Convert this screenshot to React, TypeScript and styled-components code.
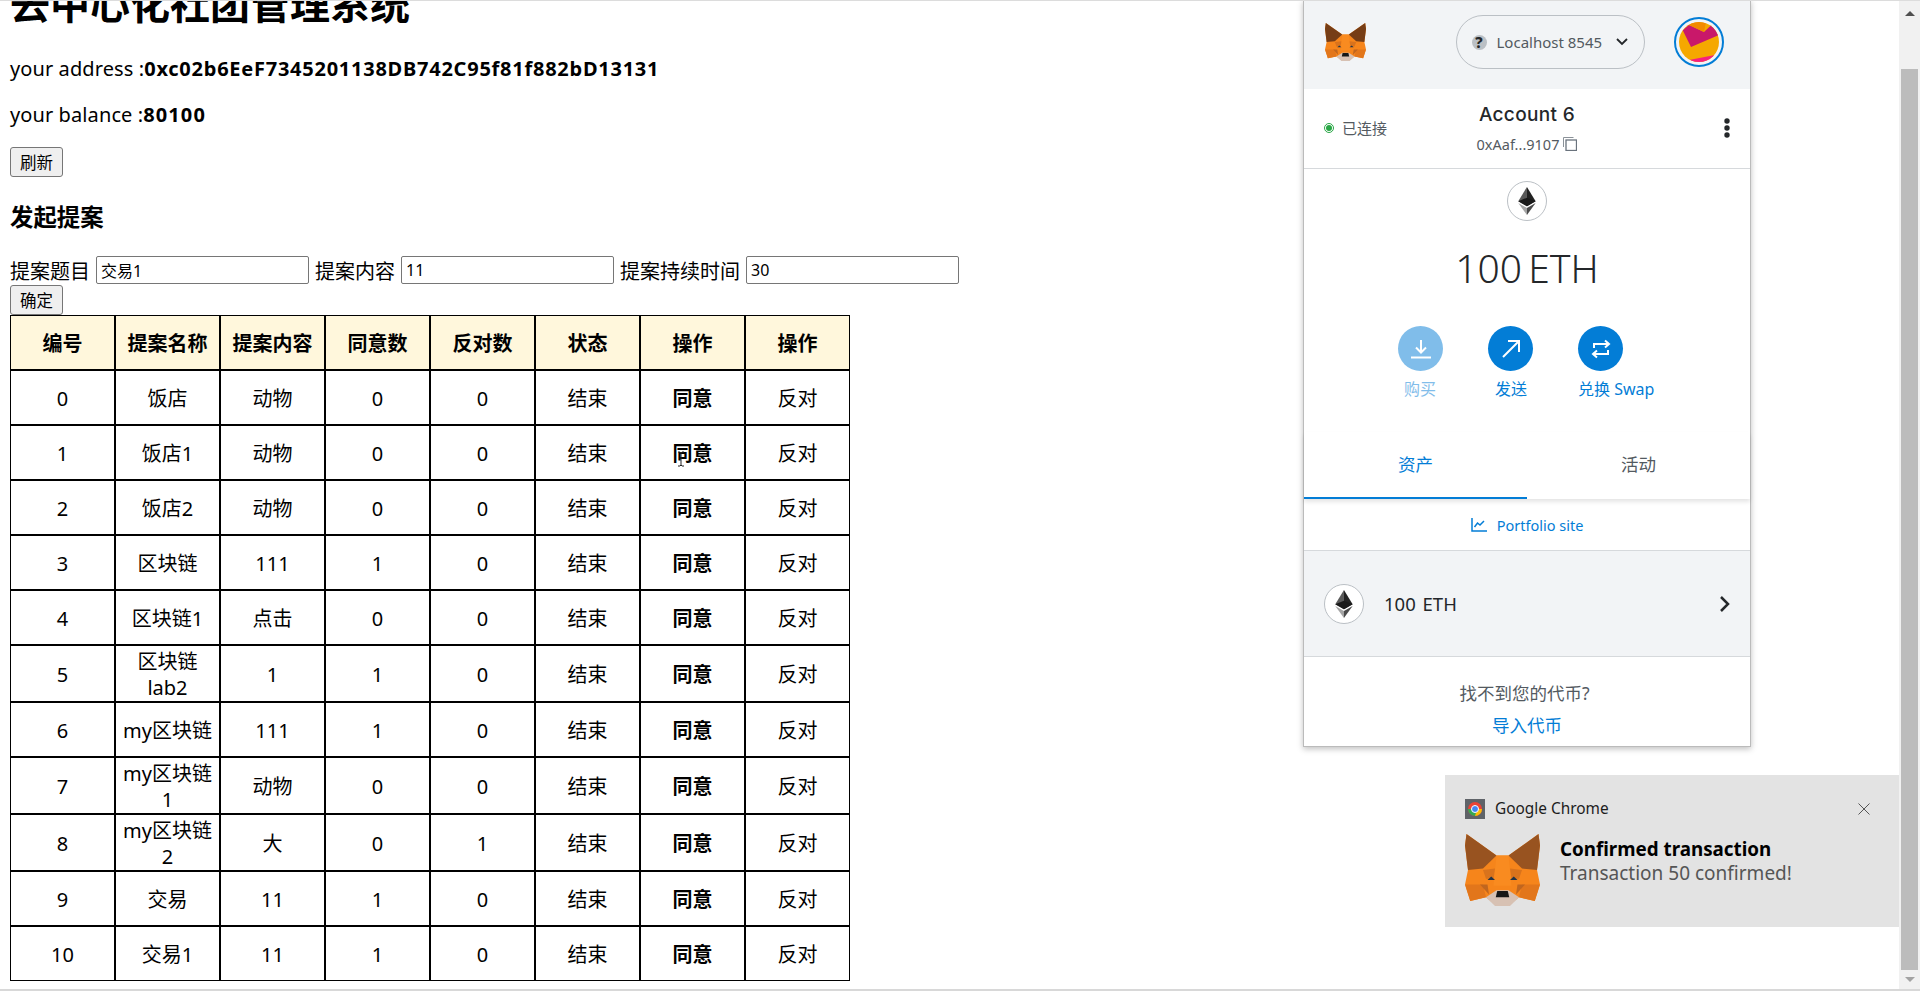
import React from "react";
import styled, { createGlobalStyle } from "styled-components";

const Global = createGlobalStyle`
  html, body { margin: 0; padding: 0; height: 991px; overflow: hidden; background: #fff; }
  #root { height: 991px; }
`;
const FONT = `"Noto Sans", "Noto Sans CJK SC", sans-serif`;
const Viewport = styled.div`
  position: relative; width: 1920px; height: 991px; overflow: hidden;
  border-top: 1px solid #dcdcdc; border-bottom: 2px solid #d8d8d8; box-sizing: border-box;
  font-family: ${FONT}; color: #000; font-size: 20px;
`;
const Page = styled.main`
  padding: 0 10px; margin-top: -20px; width: 1040px;
`;
const Title = styled.h1`
  margin: 0 0 28px; font-size: 40px; line-height: 46px; font-weight: 700;
`;
const InfoLine = styled.p`
  margin: 0 0 18px; line-height: 28px; font-size: 20px; white-space: nowrap; letter-spacing: .1px;
`;
const InfoValue = styled.b<{ $spacing: number }>`
  font-weight: 700; letter-spacing: ${p => p.$spacing}px;
`;
const Button = styled.button`
  display: block; width: 53px; height: 30px; padding: 0; background: #efefef;
  border: 1px solid #767676; border-radius: 3px; font: 16.5px ${FONT}; color: #000;
`;
const SubTitle = styled.h3`
  margin: 27px 0 25px; font-size: 23.4px; line-height: 27px; font-weight: 700;
`;
const FormRow = styled.div`
  display: flex; align-items: center; height: 28px; gap: 6px; white-space: nowrap; margin-bottom: 1px;
`;
const Field = styled.input`
  width: 213px; height: 28px; box-sizing: border-box; padding: 0 4px;
  border: 1px solid #767676; border-radius: 2px; font: 16px ${FONT}; color: #000;
`;
const Table = styled.table`
  border-collapse: separate; border-spacing: 0; table-layout: fixed; width: 840px; text-align: center;
`;
const Th = styled.th`
  box-sizing: border-box; width: 105px; height: 55px; padding: 2px 1px 0; background: #fff7dc; font-size: 20px; font-weight: 700;
  border: 1px solid #000; line-height: 24px;
`;
const Td = styled.td<{ $strong?: boolean }>`
  box-sizing: border-box; padding: 2.5px 1px .5px; height: 55px; font-size: 20px; line-height: 26px; font-weight: ${p => (p.$strong ? 700 : 400)};
  border: 1px solid #000; white-space: pre-line;
`;
const Popup = styled.section`
  position: absolute; left: 1303px; top: -1px; width: 448px; height: 747px; background: #fff;
  box-sizing: border-box; border-left: 1px solid #bbb; border-right: 1px solid #bbb; border-bottom: 1px solid #bbb;
  box-shadow: 0 2px 6px rgba(0,0,0,.25); font-family: ${FONT}; color: #24272a;
  display: flex; flex-direction: column;
`;
const AppBar = styled.header`
  height: 89px; flex: none; background: #f2f4f6; display: flex; align-items: center; padding: 0 26px 5px 21px; box-sizing: border-box; justify-content: space-between;
`;
const Network = styled.div`
  margin-left: 60px; width: 189px; height: 54px; box-sizing: border-box; border: 1px solid #bbc0c5; border-radius: 27px;
  display: flex; align-items: center; gap: 10px; padding-left: 15px; color: #535a61; font-size: 15px;
`;
const NetQuestion = styled.span`
  width: 15px; height: 15px; border-radius: 50%; background: #bbc0c5; color: #24272a; font-weight: 800; font-size: 15px; line-height: 15px;
  display: flex; align-items: center; justify-content: center;
`;
const Avatar = styled.div`
  width: 50px; height: 50px; box-sizing: border-box; border: 2px solid #037dd6; border-radius: 50%; padding: 3px; display: flex;
`;
const AccountBar = styled.div`
  height: 80px; box-sizing: border-box; flex: none; border-bottom: 1px solid #d6d9dc; display: flex; align-items: center; padding: 0 19px 2px 20px; position: relative; justify-content: space-between;
`;
const Connected = styled.div`
  display: flex; align-items: center; gap: 8px; font-size: 15px; color: #535a61;
`;
const Dot = styled.span`
  width: 10px; height: 10px; box-sizing: border-box; border-radius: 50%; border: 1px solid #28a745; display: flex; align-items: center; justify-content: center;
  &::after { content: ""; width: 6px; height: 6px; border-radius: 50%; background: #28a745; }
`;
const AccountCenter = styled.div`
  position: absolute; left: 0; right: 0; top: 14px; display: flex; flex-direction: column; align-items: center; gap: 7px; pointer-events: none;
`;
const AccountName = styled.div`
  font-size: 19px; font-weight: 500; line-height: 24px; letter-spacing: .35px; font-family: "Inter", ${FONT};
`;
const AccountAddr = styled.div`
  font-size: 14.5px; line-height: 20px; color: #535a61; display: flex; align-items: center; gap: 4px;
`;
const Balance = styled.div`
  flex: none; height: 263px; box-sizing: border-box; display: flex; flex-direction: column; align-items: center; padding-top: 12px;
`;
const EthCircle = styled.div<{ $size: number }>`
  width: ${p => p.$size}px; height: ${p => p.$size}px; border-radius: 50%; background: #fff; border: 1px solid #bbc0c5; box-sizing: border-box;
  display: flex; align-items: center; justify-content: center; flex: none;
`;
const Amount = styled.div`
  margin-top: 24px; font-size: 39px; line-height: 46px; font-weight: 300; color: #24272a; word-spacing: -4px;
`;
const Actions = styled.div`
  display: flex; margin-top: 35px; padding-left: 94px; align-self: stretch;
`;
const Action = styled.div<{ $faded?: boolean }>`
  width: 90px; display: flex; flex-direction: column; align-items: flex-start; opacity: ${p => (p.$faded ? 0.5 : 1)}; color: #037dd6;
`;
const ActionCircle = styled.span`
  width: 45px; height: 45px; border-radius: 50%; background: #037dd6; display: flex; align-items: center; justify-content: center;
`;
const ActionLabel = styled.span<{ $indent: number }>`
  margin-top: 8px; margin-left: ${p => p.$indent}px; font-size: 16px; line-height: 20px; white-space: nowrap;
`;
const Tabs = styled.nav`
  flex: none; display: flex; height: 67px; box-shadow: 0 3px 4px rgba(0,0,0,.1); position: relative;
`;
const Tab = styled.div<{ $active?: boolean }>`
  flex: 1; display: flex; align-items: center; justify-content: center; font-size: 17.5px; padding-bottom: 2px;
  color: ${p => (p.$active ? "#037dd6" : "#535a61")}; border-bottom: 2px solid ${p => (p.$active ? "#037dd6" : "transparent")};
`;
const PortfolioRow = styled.div`
  flex: none; height: 51px; border-bottom: 1px solid #d6d9dc; display: flex; align-items: center; justify-content: center; gap: 10px; color: #037dd6; font-size: 14.5px;
`;
const AssetRow = styled.div`
  flex: none; height: 105px; background: #f2f4f6; border-bottom: 1px solid #d6d9dc; display: flex; align-items: center; padding: 0 20px; gap: 20px; font-size: 18.5px; color: #24272a;
`;
const AssetText = styled.span`flex: 1; word-spacing: 2px;`;
const Help = styled.div`
  flex: 1; display: flex; flex-direction: column; align-items: center; padding-top: 20px; font-size: 17.5px; line-height: 32px; color: #535a61;
`;
const HelpQuestion = styled.span`margin-right: 5px;`;
const HelpLink = styled.span`color: #037dd6;`;
const Toast = styled.aside`
  position: absolute; left: 1445px; top: 774px; width: 455px; height: 152px; background: #e3e3e3; font-family: ${FONT};
  padding: 24px 30px 0 20px; box-sizing: border-box;
`;
const ToastHead = styled.div`
  display: flex; align-items: center; gap: 10px; font-size: 15.4px; color: #1c1c1c; height: 20px; line-height: 20px;
`;
const ToastApp = styled.span`flex: 1;`;
const ToastBody = styled.div`
  display: flex; margin-top: 15px; gap: 20px; align-items: flex-start;
`;
const ToastText = styled.div`padding-top: 3px;`;
const ToastTitle = styled.div`font-size: 18.8px; font-weight: 700; line-height: 24px; color: #000;`;
const ToastSub = styled.div`font-size: 19px; line-height: 24px; color: #555;`;
const Scrollbar = styled.div`
  position: absolute; left: 1899px; top: 0; width: 21px; bottom: 0; background: #f1f1f1;
  display: flex; flex-direction: column; align-items: center;
`;
const ScrollArrow = styled.div<{ $down?: boolean }>`
  flex: none; width: 21px; height: ${p => (p.$down ? 19 : 24)}px; display: flex; align-items: center; justify-content: center;
  &::after { content: ""; border-left: 5px solid transparent; border-right: 5px solid transparent;
    ${p => (p.$down ? "border-top: 5px solid #a3a3a3;" : "border-bottom: 5px solid #505050;")} }
`;
const Thumb = styled.div`
  width: 17px; margin-top: 44px; flex: 1; background: #bcbcbc;
`;
const Cursor = styled.svg`position: absolute; left: 676px; top: 450px;`;

const Fox = ({ w, h, ear }: { w: number; h: number; ear: string }) => (
  <svg width={w} height={h} viewBox="0 0 100 100" preserveAspectRatio="none">
    <polygon points="2,0 42,30 58,30 98,0 100,16 96,50 100,70 93,93 72,88 60,98 40,98 28,88 7,93 0,70 4,50 0,16" fill="#f6851b" />
    <polygon points="2,0 42,30 24,48 4,50 0,16" fill={ear} />
    <polygon points="98,0 58,30 76,48 96,50 100,16" fill={ear} />
    <polygon points="42,30 58,30 62,72 38,72" fill="#f98b20" />
    <polygon points="24,50 40,48 38,62 28,62" fill="#d9731c" />
    <polygon points="76,50 60,48 62,62 72,62" fill="#d9731c" />
    <polygon points="0,70 24,70 28,88 7,93" fill="#e2761b" />
    <polygon points="100,70 76,70 72,88 93,93" fill="#e2761b" />
    <polygon points="20,70 30,70 32,84" fill="#c0661f" />
    <polygon points="80,70 70,70 68,84" fill="#c0661f" />
    <polygon points="30,64 40,64 35,59" fill="#233447" />
    <polygon points="70,64 60,64 65,59" fill="#233447" />
    <polygon points="28,88 42,78 58,78 72,88 60,100 40,100" fill="#d7c1b3" />
    <polygon points="43,79 57,79 59,88 41,88" fill="#161616" />
  </svg>
);
const Eth = ({ h }: { h: number }) => (
  <svg width={h * 0.64} height={h} viewBox="0 0 62 100">
    <polygon points="31,0 0,51 31,69" fill="#5a5a5a" />
    <polygon points="31,0 62,51 31,69" fill="#222" />
    <polygon points="0,51 31,38 62,51 31,69" fill="#1a1a1a" />
    <polygon points="0,57 31,100 31,75" fill="#a5a5a5" />
    <polygon points="62,57 31,100 31,75" fill="#4a4a4a" />
  </svg>
);

const rows: [string, string, string, string, string][] = [
  ["0", "饭店", "动物", "0", "0"],
  ["1", "饭店1", "动物", "0", "0"],
  ["2", "饭店2", "动物", "0", "0"],
  ["3", "区块链", "111", "1", "0"],
  ["4", "区块链1", "点击", "0", "0"],
  ["5", "区块链\nlab2", "1", "1", "0"],
  ["6", "my区块链", "111", "1", "0"],
  ["7", "my区块链\n1", "动物", "0", "0"],
  ["8", "my区块链\n2", "大", "0", "1"],
  ["9", "交易", "11", "1", "0"],
  ["10", "交易1", "11", "1", "0"],
];
const heads = ["编号", "提案名称", "提案内容", "同意数", "反对数", "状态", "操作", "操作"];

export default function App() {
  return (
    <Viewport>
      <Global />
      <Page>
        <Title>去中心化社团管理系统</Title>
        <InfoLine>your address :<InfoValue $spacing={0.75}>0xc02b6EeF7345201138DB742C95f81f882bD13131</InfoValue></InfoLine>
        <InfoLine>your balance :<InfoValue $spacing={1.1}>80100</InfoValue></InfoLine>
        <Button>刷新</Button>
        <SubTitle>发起提案</SubTitle>
        <FormRow>
          <span>提案题目</span><Field defaultValue="交易1" />
          <span>提案内容</span><Field defaultValue="11" />
          <span>提案持续时间</span><Field defaultValue="30" />
        </FormRow>
        <Button>确定</Button>
        <Table>
          <thead><tr>{heads.map((h, i) => <Th key={i}>{h}</Th>)}</tr></thead>
          <tbody>
            {rows.map(r => (
              <tr key={r[0]}>
                {r.map((c, i) => <Td key={i}>{c}</Td>)}
                <Td>结束</Td><Td $strong>同意</Td><Td>反对</Td>
              </tr>
            ))}
          </tbody>
        </Table>
      </Page>
      <Cursor width="10" height="16" viewBox="0 0 10 16"><path d="M2 1h2l1 1 1-1h2M5 2v12M2 15h2l1-1 1 1h2" fill="none" stroke="#222" /></Cursor>

      <Popup>
        <AppBar>
          <Fox w={41} h={38} ear="#763d16" />
          <Network>
            <NetQuestion>?</NetQuestion>
            <span>Localhost 8545</span>
            <svg width="12" height="8" viewBox="0 0 12 8" style={{ marginLeft: 4 }}><path d="M1 1l5 5 5-5" fill="none" stroke="#24272a" strokeWidth="1.8" /></svg>
          </Network>
          <Avatar>
            <svg width="40" height="40" viewBox="0 0 40 40">
              <clipPath id="av"><circle cx="20" cy="20" r="20" /></clipPath>
              <g clipPath="url(#av)">
                <rect width="40" height="40" fill="#f5a800" />
                <polygon points="3.700,8.300 12,25 40,13 33.700,1.700 25,10 10,3" fill="#c9186a" />
                <polygon points="10,3 14,0 27,0 25,10" fill="#f28a00" />
                <polygon points="10,38 36,33 40,40 10,40" fill="#f7207f" />
              </g>
            </svg>
          </Avatar>
        </AppBar>
        <AccountBar>
          <Connected><Dot />已连接</Connected>
          <AccountCenter>
            <AccountName>Account 6</AccountName>
            <AccountAddr>0xAaf...9107
              <svg width="14" height="14" viewBox="0 0 14 14"><path d="M.5 10V.5h10" fill="none" stroke="#8b9299" /><rect x="3" y="3" width="10.500" height="10.500" fill="none" stroke="#6a737d" strokeWidth="1.300" /></svg>
            </AccountAddr>
          </AccountCenter>
          <svg width="8" height="20" viewBox="0 0 8 20"><circle cx="4" cy="3" r="2.700" fill="#24272a" /><circle cx="4" cy="10" r="2.700" fill="#24272a" /><circle cx="4" cy="17" r="2.700" fill="#24272a" /></svg>
        </AccountBar>
        <Balance>
          <EthCircle $size={40}><Eth h={28} /></EthCircle>
          <Amount>100 ETH</Amount>
          <Actions>
            <Action $faded>
              <ActionCircle><svg width="22" height="22" viewBox="0 0 22 22" fill="none" stroke="#fff" strokeWidth="2"><path d="M11 2v12M6 9.500l5 5 5-5M1 19.500h20" /></svg></ActionCircle>
              <ActionLabel $indent={6}>购买</ActionLabel>
            </Action>
            <Action>
              <ActionCircle><svg width="20" height="20" viewBox="0 0 20 20" fill="none" stroke="#fff" strokeWidth="2"><path d="M2 18L18 2M7 2h11v11" /></svg></ActionCircle>
              <ActionLabel $indent={7}>发送</ActionLabel>
            </Action>
            <Action>
              <ActionCircle><svg width="20" height="20" viewBox="0 0 20 20" fill="none" stroke="#fff" strokeWidth="2"><path d="M3 9V5h14M14 1.500l4 3.500-4 3.500M17 11v4H3M6 11.500l-4 3.500 4 3.500" /></svg></ActionCircle>
              <ActionLabel $indent={0}>兑换 Swap</ActionLabel>
            </Action>
          </Actions>
        </Balance>
        <Tabs>
          <Tab $active>资产</Tab>
          <Tab>活动</Tab>
        </Tabs>
        <PortfolioRow>
          <svg width="16" height="14" viewBox="0 0 16 14" fill="none" stroke="#037dd6" strokeWidth="1.500"><path d="M1 0v13h15M3.500 9l3-4 2.500 2 4-4" /></svg>
          Portfolio site
        </PortfolioRow>
        <AssetRow>
          <EthCircle $size={40}><Eth h={28} /></EthCircle>
          <AssetText>100 ETH</AssetText>
          <svg width="11" height="18" viewBox="0 0 11 18" fill="none" stroke="#24272a" strokeWidth="2.500"><path d="M2 2l7 7-7 7" /></svg>
        </AssetRow>
        <Help>
          <HelpQuestion>找不到您的代币?</HelpQuestion>
          <HelpLink>导入代币</HelpLink>
        </Help>
      </Popup>

      <Toast>
        <ToastHead>
          <svg width="20" height="20" viewBox="0 0 20 20">
            <rect width="20" height="20" fill="#5f6368" />
            <circle cx="10" cy="10" r="7" fill="#ea4335" />
            <path d="M10 17a7 7 0 0 0 7-7h-7z" fill="#fbbc05" />
            <path d="M3 10a7 7 0 0 0 7 7l2-7z" fill="#34a853" />
            <circle cx="10" cy="10" r="3.500" fill="#4285f4" stroke="#fff" />
          </svg>
          <ToastApp>Google Chrome</ToastApp>
          <svg width="12" height="12" viewBox="0 0 12 12" stroke="#555" fill="none"><path d="M.5.5l11 11M11.500.5l-11 11" /></svg>
        </ToastHead>
        <ToastBody>
          <Fox w={75} h={72} ear="#985320" />
          <ToastText>
            <ToastTitle>Confirmed transaction</ToastTitle>
            <ToastSub>Transaction 50 confirmed!</ToastSub>
          </ToastText>
        </ToastBody>
      </Toast>

      <Scrollbar>
        <ScrollArrow />
        <Thumb />
        <ScrollArrow $down />
      </Scrollbar>
    </Viewport>
  );
}
